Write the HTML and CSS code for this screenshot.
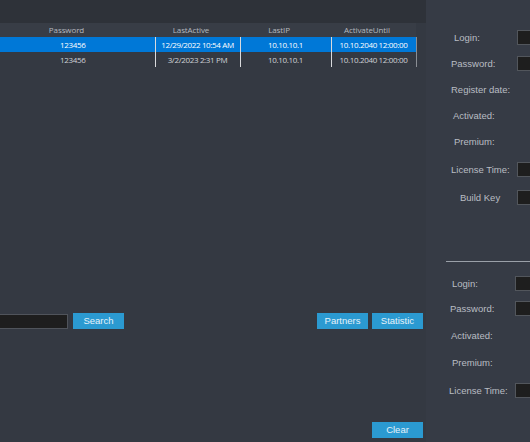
FILE: index.html
```html
<!DOCTYPE html>
<html lang="en">
<head>
    <meta charset="UTF-8">
    <meta name="viewport" content="width=device-width, initial-scale=1.0">
    <title>Users</title>
    <link rel="stylesheet" href="styles.css">
</head>
<body>

<div class="window">
    <div class="main">
        <div class="topbar"></div>

        <div class="grid-wrap">
            <table class="grid">
                <colgroup>
                    <col class="col-pass">
                    <col class="col-active">
                    <col class="col-ip">
                    <col class="col-until">
                </colgroup>
                <thead>
                    <tr>
                        <th>Password</th>
                        <th>LastActive</th>
                        <th>LastIP</th>
                        <th>ActivateUntil</th>
                    </tr>
                </thead>
                <tbody>
                    <tr class="selected">
                        <td>123456</td>
                        <td class="sep">12/29/2022 10:54 AM</td>
                        <td class="sep">10.10.10.1</td>
                        <td class="sep last">10.10.2040 12:00:00</td>
                    </tr>
                    <tr>
                        <td>123456</td>
                        <td class="sep">3/2/2023 2:31 PM</td>
                        <td class="sep">10.10.10.1</td>
                        <td class="sep last">10.10.2040 12:00:00</td>
                    </tr>
                </tbody>
            </table>
        </div>

        <div class="toolbar">
            <input class="search-box" type="text">
            <button class="btn">Search</button>
            <div class="spacer"></div>
            <button class="btn">Partners</button>
            <button class="btn">Statistic</button>
        </div>

        <div class="bottombar">
            <button class="btn">Clear</button>
        </div>
    </div>

    <div class="side">
        <div class="group first">
            <div class="field h26"><span class="label p3">Login:</span><span class="box"></span></div>
            <div class="field h26"><span class="label">Password:</span><span class="box"></span></div>
            <div class="field h26"><span class="label">Register date:</span></div>
            <div class="field h26"><span class="label p2">Activated:</span></div>
            <div class="field h26"><span class="label p3">Premium:</span></div>
            <div class="field h30"><span class="label">License Time:</span><span class="box"></span></div>
            <div class="field h26"><span class="label p9">Build Key</span><span class="box"></span></div>
        </div>

        <div class="divider"></div>

        <div class="group second">
            <div class="field h26"><span class="label p3">Login:</span><span class="box"></span></div>
            <div class="field h24"><span class="label p1">Password:</span><span class="box"></span></div>
            <div class="field h30"><span class="label p2">Activated:</span></div>
            <div class="field h24"><span class="label p3">Premium:</span></div>
            <div class="field h32"><span class="label">License Time:</span><span class="box"></span></div>
        </div>
    </div>
</div>

</body>
</html>
```

FILE: styles.css
```css
html, body {
    margin: 0;
    padding: 0;
}

body {
    width: 530px;
    height: 442px;
    overflow: hidden;
    background-color: #343942;
    font-family: "Liberation Sans", Arial, sans-serif;
}

.window {
    display: flex;
    height: 442px;
}

/* left part */
.main {
    width: 426px;
    display: flex;
    flex-direction: column;
    overflow: hidden;
    background-color: #343942;
}

.topbar {
    height: 23px;
    flex-shrink: 0;
    background-color: #2e3239;
}

.grid-wrap {
    margin-left: -9px;
    height: 45px;
}

.grid {
    border-collapse: collapse;
    table-layout: fixed;
    width: 425px;
    font-family: "Open Sans", "Noto Sans", sans-serif;
    font-size: 8px;
}

.col-pass { width: 164px; }
.col-active { width: 85px; }
.col-ip { width: 91px; }
.col-until { width: 85px; }

.grid th {
    height: 14px;
    padding: 0 13px 0 0;
    font-weight: normal;
    color: #b5b9bf;
    background-color: #383d46;
    text-align: center;
    line-height: 14px;
    letter-spacing: -0.1px;
}

.grid td {
    height: 15px;
    padding: 0;
    color: #cfd2d6;
    text-align: center;
    line-height: 15px;
    white-space: nowrap;
    letter-spacing: -0.35px;
}

.grid td.sep {
    border-left: 1px solid #d8dadd;
}

.grid td.last {
    border-right: 1px solid #8a8e94;
}

.grid tr.selected td {
    background-color: #0078d7;
    color: #ffffff;
}

.toolbar {
    display: flex;
    align-items: center;
    margin-top: 245px;
    height: 16px;
    padding-right: 3px;
}

.search-box {
    width: 76px;
    height: 15px;
    margin: 0 5px 0 -8px;
    padding: 0;
    box-sizing: border-box;
    background-color: #1e1e1e;
    border: 1px solid #50545b;
    outline: none;
}

.spacer {
    flex: 1;
}

.btn {
    width: 51px;
    height: 16px;
    margin: 0 0 0 4px;
    padding: 0;
    border: none;
    background-color: #2b9ad1;
    color: #e6f2fa;
    font-family: "Liberation Sans", Arial, sans-serif;
    font-size: 9.5px;
    line-height: 16px;
}

.toolbar .btn:first-of-type {
    margin-left: 0;
}

.bottombar {
    display: flex;
    justify-content: flex-end;
    margin-top: 93px;
    padding-right: 3px;
}

/* right part */
.side {
    width: 104px;
    background-color: #363b45;
    color: #b9bdc3;
    font-size: 9.5px;
}

.group.first {
    margin-top: 24px;
}

.field {
    display: flex;
    align-items: center;
}

.h24 { height: 24px; }
.h26 { height: 26px; }
.h30 { height: 30px; }
.h32 { height: 32px; }

.label {
    box-sizing: border-box;
    width: 91px;
    flex-shrink: 0;
    padding-left: 25px;
    white-space: nowrap;
}

.second .label {
    width: 89px;
    padding-left: 23px;
}

.label.p1 { padding-left: 24px; }
.label.p2 { padding-left: 27px; }
.label.p3 { padding-left: 28px; }
.label.p9 { padding-left: 34px; }

.second .label.p1 { padding-left: 24px; }
.second .label.p2 { padding-left: 25px; }
.second .label.p3 { padding-left: 26px; }

.box {
    display: block;
    width: 20px;
    height: 15px;
    flex-shrink: 0;
    box-sizing: border-box;
    background-color: #1e1e1e;
    border: 1px solid #52565c;
}

.divider {
    height: 1px;
    margin: 51px 0 8px 20px;
    background-color: #9aa0a8;
}
```
